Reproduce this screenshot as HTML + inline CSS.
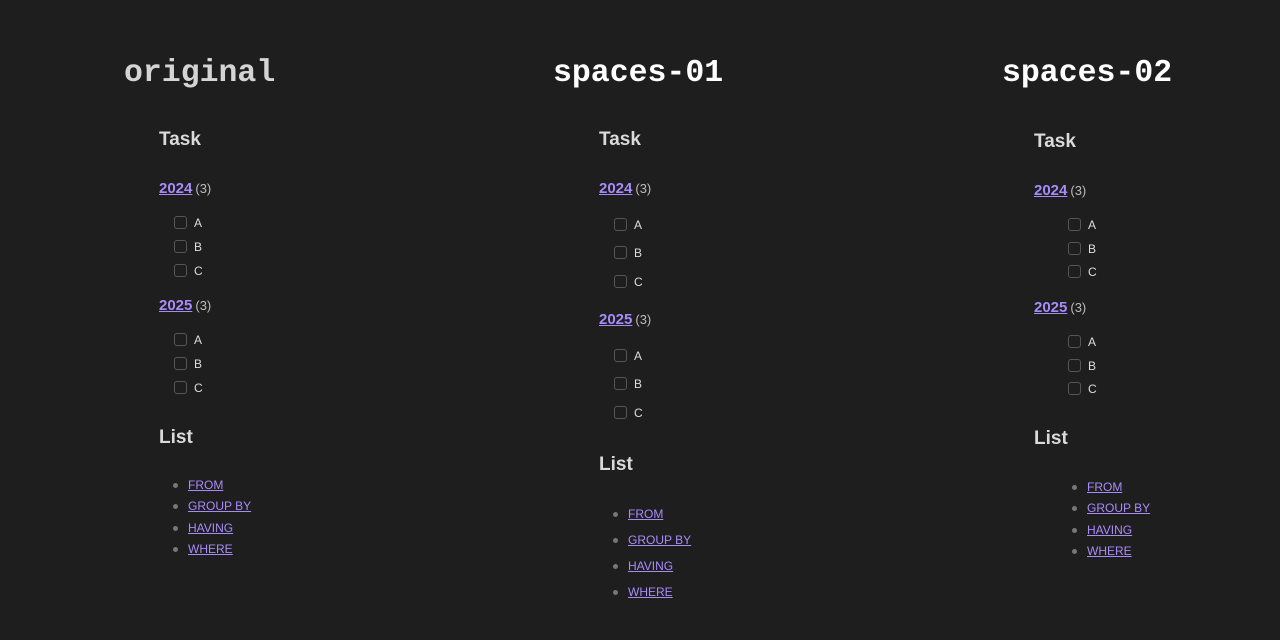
<!DOCTYPE html>
<html><head><meta charset="utf-8"><style>
html,body{margin:0;padding:0;background:#1e1e1e;width:1280px;height:640px;overflow:hidden}
body{position:relative;font-family:"Liberation Sans","DejaVu Sans",sans-serif;color:#dadada}
.a{position:absolute;line-height:20px;height:20px;white-space:nowrap}
.h1{font-family:"Liberation Mono",monospace;font-weight:bold;font-size:31.5px;line-height:40px;height:40px;color:#fff}
.h2{font-size:19px;font-weight:bold;color:#dadada}
.yr{font-size:15px;color:#a88bfa;text-decoration:underline;font-weight:bold}
.yr span{color:#bbb;font-weight:normal;font-size:13px;text-decoration:none;display:inline-block;margin-left:3px}
.cb{font-size:12px;color:#ddd}
.cb i{display:inline-block;width:11px;height:11px;border:1px solid #555;border-radius:3px;vertical-align:-2px;margin-right:7px}
.li{font-size:12px;color:#a88bfa;text-decoration:underline}
.dot{position:absolute;width:5px;height:5px;border-radius:50%;background:#777}
</style></head><body>
<div class="a h1" style="left:124px;top:54px;color:#d4d4d4">original</div>
<div class="a h1" style="left:553px;top:54px">spaces-01</div>
<div class="a h1" style="left:1002px;top:54px">spaces-02</div>

<div class="a h2" style="left:159px;top:130px">Task</div>
<div class="a yr" style="left:159px;top:179px">2024<span>(3)</span></div>
<div class="a cb" style="left:174px;top:213px"><i></i>A</div>
<div class="a cb" style="left:174px;top:237px"><i></i>B</div>
<div class="a cb" style="left:174px;top:261px"><i></i>C</div>
<div class="a yr" style="left:159px;top:296px">2025<span>(3)</span></div>
<div class="a cb" style="left:174px;top:330px"><i></i>A</div>
<div class="a cb" style="left:174px;top:354px"><i></i>B</div>
<div class="a cb" style="left:174px;top:378px"><i></i>C</div>
<div class="a h2" style="left:159px;top:428px">List</div>
<div class="dot" style="left:173px;top:483px"></div><div class="a li" style="left:188px;top:475px">FROM</div>
<div class="dot" style="left:173px;top:504px"></div><div class="a li" style="left:188px;top:496px">GROUP BY</div>
<div class="dot" style="left:173px;top:526px"></div><div class="a li" style="left:188px;top:518px">HAVING</div>
<div class="dot" style="left:173px;top:547px"></div><div class="a li" style="left:188px;top:539px">WHERE</div>

<div class="a h2" style="left:599px;top:130px">Task</div>
<div class="a yr" style="left:599px;top:179px">2024<span>(3)</span></div>
<div class="a cb" style="left:614px;top:215px"><i></i>A</div>
<div class="a cb" style="left:614px;top:243px"><i></i>B</div>
<div class="a cb" style="left:614px;top:272px"><i></i>C</div>
<div class="a yr" style="left:599px;top:310px">2025<span>(3)</span></div>
<div class="a cb" style="left:614px;top:346px"><i></i>A</div>
<div class="a cb" style="left:614px;top:374px"><i></i>B</div>
<div class="a cb" style="left:614px;top:403px"><i></i>C</div>
<div class="a h2" style="left:599px;top:455px">List</div>
<div class="dot" style="left:613px;top:512px"></div><div class="a li" style="left:628px;top:504px">FROM</div>
<div class="dot" style="left:613px;top:538px"></div><div class="a li" style="left:628px;top:530px">GROUP BY</div>
<div class="dot" style="left:613px;top:564px"></div><div class="a li" style="left:628px;top:556px">HAVING</div>
<div class="dot" style="left:613px;top:590px"></div><div class="a li" style="left:628px;top:582px">WHERE</div>

<div class="a h2" style="left:1034px;top:132px">Task</div>
<div class="a yr" style="left:1034px;top:181px">2024<span>(3)</span></div>
<div class="a cb" style="left:1068px;top:215px"><i></i>A</div>
<div class="a cb" style="left:1068px;top:239px"><i></i>B</div>
<div class="a cb" style="left:1068px;top:262px"><i></i>C</div>
<div class="a yr" style="left:1034px;top:298px">2025<span>(3)</span></div>
<div class="a cb" style="left:1068px;top:332px"><i></i>A</div>
<div class="a cb" style="left:1068px;top:356px"><i></i>B</div>
<div class="a cb" style="left:1068px;top:379px"><i></i>C</div>
<div class="a h2" style="left:1034px;top:429px">List</div>
<div class="dot" style="left:1072px;top:485px"></div><div class="a li" style="left:1087px;top:477px">FROM</div>
<div class="dot" style="left:1072px;top:506px"></div><div class="a li" style="left:1087px;top:498px">GROUP BY</div>
<div class="dot" style="left:1072px;top:528px"></div><div class="a li" style="left:1087px;top:520px">HAVING</div>
<div class="dot" style="left:1072px;top:549px"></div><div class="a li" style="left:1087px;top:541px">WHERE</div>
</body></html>
